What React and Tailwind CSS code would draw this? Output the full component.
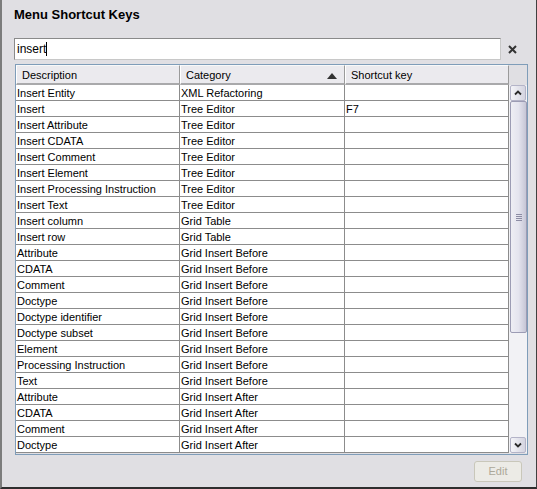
import React from "react";

const rows = [
  ["Insert Entity", "XML Refactoring", ""],
  ["Insert", "Tree Editor", "F7"],
  ["Insert Attribute", "Tree Editor", ""],
  ["Insert CDATA", "Tree Editor", ""],
  ["Insert Comment", "Tree Editor", ""],
  ["Insert Element", "Tree Editor", ""],
  ["Insert Processing Instruction", "Tree Editor", ""],
  ["Insert Text", "Tree Editor", ""],
  ["Insert column", "Grid Table", ""],
  ["Insert row", "Grid Table", ""],
  ["Attribute", "Grid Insert Before", ""],
  ["CDATA", "Grid Insert Before", ""],
  ["Comment", "Grid Insert Before", ""],
  ["Doctype", "Grid Insert Before", ""],
  ["Doctype identifier", "Grid Insert Before", ""],
  ["Doctype subset", "Grid Insert Before", ""],
  ["Element", "Grid Insert Before", ""],
  ["Processing Instruction", "Grid Insert Before", ""],
  ["Text", "Grid Insert Before", ""],
  ["Attribute", "Grid Insert After", ""],
  ["CDATA", "Grid Insert After", ""],
  ["Comment", "Grid Insert After", ""],
  ["Doctype", "Grid Insert After", ""],
];

function HeaderCell({ label, width, sorted }) {
  return (
    <div
      className={`${width} h-full flex items-center justify-between pl-[5px] pr-[7px] pt-[2px] bg-[#ebeaee] border-t border-t-[#f8f8f8] border-l border-l-white border-r border-r-[#9a9a9a] border-b-2 border-b-[#a9a9ab]`}
    >
      <span>{label}</span>
      {sorted && (
        <span className="w-0 h-0 border-l-[5px] border-r-[5px] border-b-[6px] border-l-transparent border-r-transparent border-b-[#333]" />
      )}
    </div>
  );
}

function ScrollButton({ down }) {
  return (
    <div className="w-[16px] h-[16px] flex items-center justify-center border border-[#b4b4c8] rounded-[2px] bg-gradient-to-r from-[#f4f4f8] to-[#d4d4e0]">
      <svg width="8" height="6" viewBox="0 0 8 6">
        <path
          d={down ? "M1 1.5 L4 4.5 L7 1.5" : "M1 4.5 L4 1.5 L7 4.5"}
          fill="none"
          stroke="#2a2a2a"
          strokeWidth="1.8"
        />
      </svg>
    </div>
  );
}

export default function App() {
  return (
    <div
      className="w-[537px] h-[489px] bg-[#e0dfe3] border-l-2 border-l-[#7c7c7c] border-r border-r-[#404040] border-b-2 border-b-[#2e2e2e] flex flex-col text-[11px] text-black"
      style={{ fontFamily: "'Liberation Sans', Arial, sans-serif" }}
    >
      <div className="ml-[12px] mt-[7px] text-[13px] leading-[16px] font-bold">Menu Shortcut Keys</div>

      <div className="mt-[15px] ml-[12px] flex items-center">
        <div className="w-[487px] h-[22px] bg-white border border-[#8a8a8a] border-b-[#c8c8c8] border-r-[#c8c8c8] flex items-center pl-[2px] text-[12px]">
          insert<span className="w-px h-[14px] bg-black" />
        </div>
        <svg className="ml-[7px]" width="9" height="9" viewBox="0 0 9 9">
          <path d="M1 1 L8 8 M8 1 L1 8" stroke="#333" strokeWidth="2" />
        </svg>
      </div>

      <div className="mt-[4px] ml-[13px] w-[513px] h-[391px] border border-[#7f9db9] bg-[#e0dfe3] flex flex-col">
        <div className="h-[20px] flex">
          <HeaderCell label="Description" width="w-[164px]" />
          <HeaderCell label="Category" width="w-[165px]" sorted />
          <HeaderCell label="Shortcut key" width="w-[164px]" />
          <div className="w-[18px] h-full bg-[#e0dfe3]" />
        </div>
        <div className="flex">
          <div className="w-[493px] bg-white">
            {rows.map(([d, c, k], i) => (
              <div key={i} className="h-[16px] flex border-b border-b-[#8c8c8c]">
                <div className="w-[164px] h-[15px] pl-[1px] leading-[17px] border-r border-r-[#8c8c8c] whitespace-nowrap overflow-hidden">{d}</div>
                <div className="w-[165px] h-[15px] pl-[1px] leading-[17px] border-r border-r-[#8c8c8c] whitespace-nowrap overflow-hidden">{c}</div>
                <div className="w-[164px] h-[15px] pl-[1px] leading-[17px] border-r border-r-[#8c8c8c] whitespace-nowrap overflow-hidden">{k}</div>
              </div>
            ))}
          </div>
          <div className="w-[18px] pl-[1px] flex flex-col bg-[#f2f2f5] h-[368px]">
            <ScrollButton />
            <div className="h-[232px] border border-[#9c9cb4] rounded-[2px] bg-gradient-to-r from-[#eeeef4] via-[#e4e4ee] to-[#c6c6d6] flex items-center justify-center">
              <div className="flex flex-col gap-[1px]">
                <div className="w-[6px] h-px bg-[#8c8ca4]" />
                <div className="w-[6px] h-px bg-[#8c8ca4]" />
                <div className="w-[6px] h-px bg-[#8c8ca4]" />
                <div className="w-[6px] h-px bg-[#8c8ca4]" />
              </div>
            </div>
            <div className="flex-1" />
            <ScrollButton down />
          </div>
        </div>
      </div>

      <div className="flex justify-end mt-[6px] mr-[14px]">
        <button className="w-[48px] h-[21px] border border-[#c9c7ba] rounded-[3px] bg-[#ecebe6] text-[#aca899] text-[11px]">
          Edit
        </button>
      </div>
    </div>
  );
}
